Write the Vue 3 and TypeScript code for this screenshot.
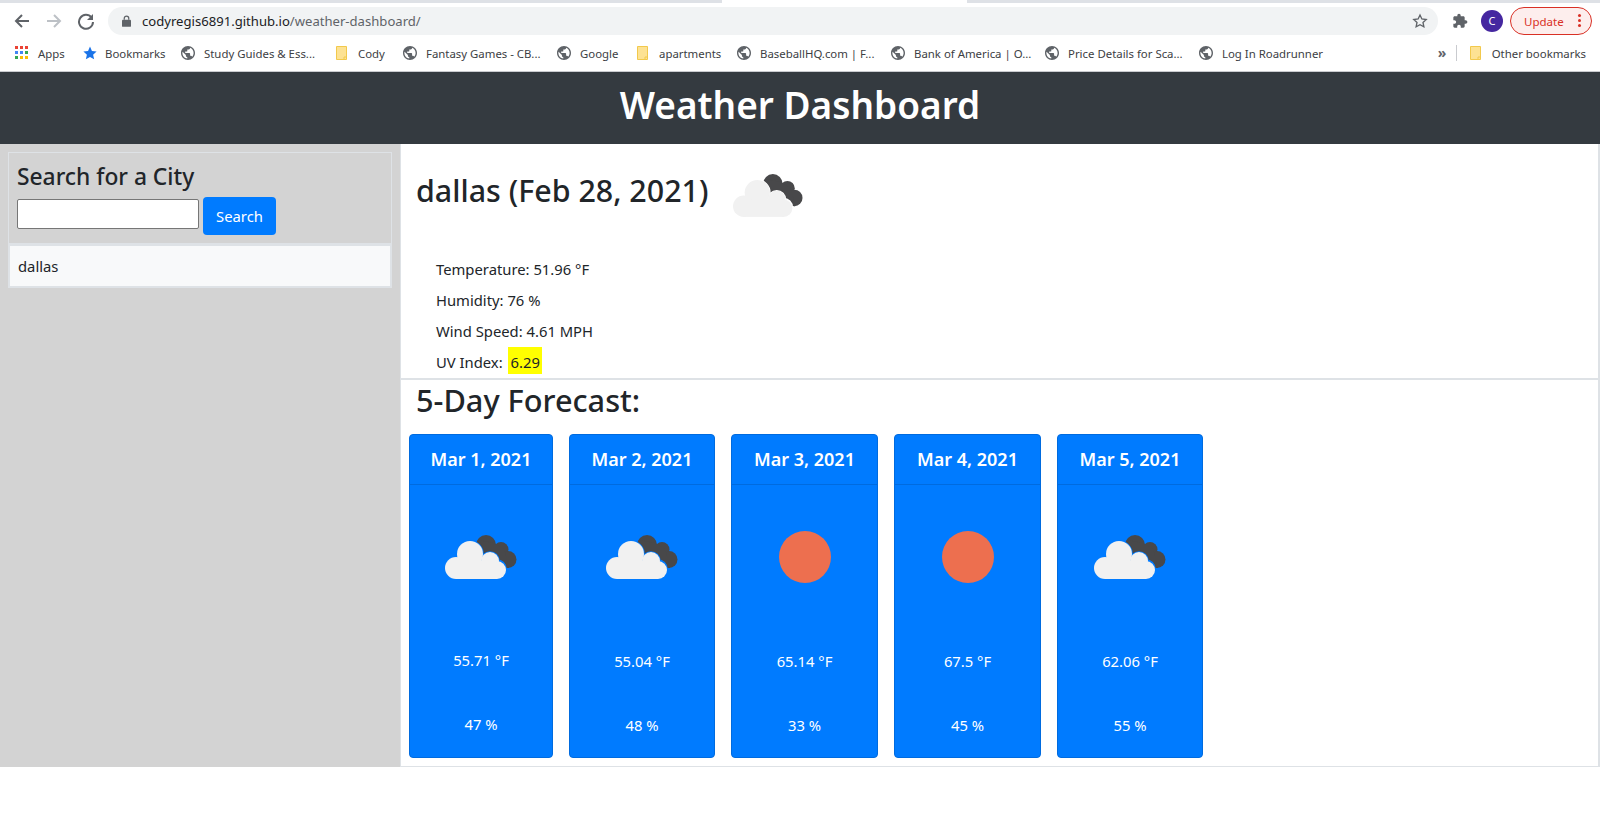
<script setup lang="ts">
interface Day { date: string; icon: 'cloud' | 'sun'; temp: string; hum: string; shift: boolean }
const days: Day[] = [
  { date: 'Mar 1, 2021', icon: 'cloud', temp: '55.71 °F', hum: '47 %', shift: true },
  { date: 'Mar 2, 2021', icon: 'cloud', temp: '55.04 °F', hum: '48 %', shift: false },
  { date: 'Mar 3, 2021', icon: 'sun', temp: '65.14 °F', hum: '33 %', shift: false },
  { date: 'Mar 4, 2021', icon: 'sun', temp: '67.5 °F', hum: '45 %', shift: false },
  { date: 'Mar 5, 2021', icon: 'cloud', temp: '62.06 °F', hum: '55 %', shift: false },
]
const marks: { label: string; kind: 'globe' | 'folder' | 'star' | 'apps'; w: number }[] = [
  { label: 'Apps', kind: 'apps', w: 68 },
  { label: 'Bookmarks', kind: 'star', w: 98 },
  { label: 'Study Guides & Ess...', kind: 'globe', w: 155 },
  { label: 'Cody', kind: 'folder', w: 67 },
  { label: 'Fantasy Games - CB...', kind: 'globe', w: 154 },
  { label: 'Google', kind: 'globe', w: 80 },
  { label: 'apartments', kind: 'folder', w: 100 },
  { label: 'BaseballHQ.com | F...', kind: 'globe', w: 154 },
  { label: 'Bank of America | O...', kind: 'globe', w: 154 },
  { label: 'Price Details for Sca...', kind: 'globe', w: 154 },
  { label: 'Log In Roadrunner', kind: 'globe', w: 130 },
]
const globe = 'M12 2C6.480 2 2 6.480 2 12s4.480 10 10 10 10-4.480 10-10S17.520 2 12 2zm-1 17.930c-3.950-.49-7-3.850-7-7.930 0-.62.08-1.210.21-1.790L9 15v1c0 1.100.9 2 2 2v1.930zm6.900-2.540c-.26-.81-1-1.390-1.900-1.390h-1v-3c0-.55-.45-1-1-1H8v-2h2c.55 0 1-.45 1-1V7h2c1.100 0 2-.9 2-2v-.41c2.930 1.190 5 4.060 5 7.410 0 2.080-.8 3.970-2.100 5.390z'
const puzzle = 'M20.500 11H19V7c0-1.100-.9-2-2-2h-4V3.500C13 2.120 11.880 1 10.500 1S8 2.120 8 3.500V5H4c-1.100 0-1.990.9-1.990 2v3.800H3.500c1.490 0 2.700 1.210 2.700 2.700s-1.210 2.700-2.700 2.700H2V20c0 1.100.9 2 2 2h3.800v-1.500c0-1.490 1.210-2.700 2.700-2.700 1.490 0 2.700 1.210 2.700 2.700V22H17c1.100 0 2-.9 2-2v-4h1.500c1.380 0 2.500-1.120 2.500-2.500S21.880 11 20.500 11z'
</script>

<template>
  <div class="page">
    <svg class="defs" width="0" height="0" aria-hidden="true">
      <symbol id="cloud" viewBox="0 0 72 44">
        <g fill="#48484a">
          <circle cx="41" cy="10" r="10"/><circle cx="56" cy="14.500" r="7.500"/><circle cx="63" cy="24.500" r="8.500"/>
          <path d="M33 5 49 8l10 6 5 19-16-2-14-14z"/>
        </g>
        <g fill="currentColor" stroke="currentColor" stroke-width="1.500">
          <circle cx="25" cy="19" r="13"/><circle cx="45" cy="26" r="9"/><circle cx="52" cy="34" r="9"/>
        </g>
        <g fill="#f1f1f1">
          <circle cx="25" cy="19" r="13"/><circle cx="45" cy="26" r="9"/><circle cx="11" cy="33" r="11"/><circle cx="52" cy="35" r="9"/>
          <rect x="11" y="26" width="41" height="18"/>
        </g>
      </symbol>
    </svg>
    <div class="tabstrip"><div class="tab-gap"></div></div>
    <div class="toolbar">
      <svg class="nav" width="18" height="18" viewBox="0 0 18 18"><path d="M16 9H4M9 3 3 9l6 6" fill="none" stroke="#5f6368" stroke-width="2"/></svg>
      <svg class="nav" width="18" height="18" viewBox="0 0 18 18"><path d="M2 9h12M9 3l6 6-6 6" fill="none" stroke="#bdc1c6" stroke-width="2"/></svg>
      <svg class="nav" width="18" height="18" viewBox="0 0 18 18"><path d="M14.500 5.500A7 7 0 1 0 16 10" fill="none" stroke="#5f6368" stroke-width="2"/><path d="M16 2v6h-6z" fill="#5f6368"/></svg>
      <div class="omnibox">
        <svg width="9" height="12" viewBox="0 0 10 13"><path d="M2.500 5V3.500a2.500 2.500 0 0 1 5 0V5" fill="none" stroke="#5f6368" stroke-width="1.400"/><rect y="5" width="10" height="8" rx="1" fill="#5f6368"/></svg>
        <span class="url"><span class="host">codyregis6891.github.io</span>/weather-dashboard/</span>
        <svg class="star" width="16" height="16" viewBox="0 0 24 24"><path d="m12 3 2.800 6 6.500.8-4.800 4.400 1.300 6.500L12 17.500 6.200 20.700l1.300-6.500L2.700 9.800 9.200 9z" fill="none" stroke="#5f6368" stroke-width="2"/></svg>
      </div>
      <svg class="puzzle" width="16" height="16" viewBox="0 0 24 24"><path :d="puzzle" fill="#5f6368"/></svg>
      <div class="avatar">C</div>
      <div class="update"><span>Update</span><i class="dots"></i></div>
    </div>
    <div class="bookmarks">
      <div v-for="m in marks" :key="m.label" class="mark" :class="m.kind" :style="{ width: m.w + 'px' }">
        <svg v-if="m.kind === 'apps'" width="14" height="14" viewBox="0 0 14 14">
          <rect x="0" y="0" width="3" height="3" fill="#ea4335"/><rect x="5" y="0" width="3" height="3" fill="#ea4335"/><rect x="10" y="0" width="3" height="3" fill="#ea4335"/>
          <rect x="0" y="5" width="3" height="3" fill="#4285f4"/><rect x="5" y="5" width="3" height="3" fill="#4285f4"/><rect x="10" y="5" width="3" height="3" fill="#34a853"/>
          <rect x="0" y="10" width="3" height="3" fill="#34a853"/><rect x="5" y="10" width="3" height="3" fill="#fbbc04"/><rect x="10" y="10" width="3" height="3" fill="#fbbc04"/>
        </svg>
        <svg v-else-if="m.kind === 'star'" width="14" height="14" viewBox="0 0 24 24"><path d="m12 1 3.300 7.500 8 .8-6 5.500 1.800 8L12 18.700 4.900 22.800l1.800-8-6-5.500 8-.8z" fill="#1a73e8"/></svg>
        <svg v-else-if="m.kind === 'folder'" width="11" height="14" viewBox="0 0 11 14"><path d="M.5.5h10v13H.5z" fill="#fde293" stroke="#f2c94c"/><path d="M8 13.500v-2.500h2.500" fill="none" stroke="#f2c94c"/></svg>
        <svg v-else width="14" height="14" viewBox="2 2 20 20"><path :d="globe" fill="#5f6368"/></svg>
        <span>{{ m.label }}</span>
      </div>
      <div class="chev">»</div>
      <div class="sep"></div>
      <div class="mark other">
        <svg width="11" height="14" viewBox="0 0 11 14"><path d="M.5.5h10v13H.5z" fill="#fde293" stroke="#f2c94c"/><path d="M8 13.500v-2.500h2.500" fill="none" stroke="#f2c94c"/></svg>
        <span>Other bookmarks</span>
      </div>
    </div>

    <header class="jumbo"><h1>Weather Dashboard</h1></header>

    <div class="layout">
      <aside class="side">
        <div class="sidebox">
          <div class="searchbox">
            <h3>Search for a City</h3>
            <div class="form">
              <input type="text" aria-label="City" />
              <button type="button">Search</button>
            </div>
          </div>
          <div class="history">dallas</div>
        </div>
      </aside>

      <main class="content">
        <section class="today">
          <div class="title">
            <h2>dallas (Feb 28, 2021)</h2>
            <svg class="bigicon" width="70" height="43"><use href="#cloud"/></svg>
          </div>
          <ul class="facts">
            <li>Temperature: 51.96 °F</li>
            <li>Humidity: 76 %</li>
            <li>Wind Speed: 4.61 MPH</li>
            <li>UV Index: <mark>6.29</mark></li>
          </ul>
        </section>
        <section class="forecast">
          <h2>5-Day Forecast:</h2>
          <div class="cards">
            <article v-for="d in days" :key="d.date" class="card" :class="{ first: d.shift }">
              <h5>{{ d.date }}</h5>
              <div class="icon">
                <svg v-if="d.icon === 'cloud'" class="cardcloud" width="72" height="44"><use href="#cloud"/></svg>
                <svg v-else viewBox="0 0 52 52" width="52" height="52"><circle cx="26" cy="26" r="26" fill="#ed6f4f"/></svg>
              </div>
              <p class="temp">{{ d.temp }}</p>
              <p class="hum">{{ d.hum }}</p>
            </article>
          </div>
        </section>
      </main>
    </div>
  </div>
</template>

<style>
html, body { margin: 0; background: #fff; }
</style>

<style scoped>
.page { height: 828px; overflow: hidden; font-family: "Noto Sans", "Open Sans", sans-serif; color: #212529; position: relative; }
.defs { position: absolute; }
.tabstrip { height: 3px; background: #dee1e6; display: flex; }
.tab-gap { width: 245px; height: 3px; margin-left: 722px; background: #fff; }
.toolbar { height: 36px; display: flex; align-items: center; padding: 0 0 0 13px; box-sizing: border-box; gap: 14px; background: #fff; }
.nav { flex: none; }
.omnibox { height: 28px; width: 1330px; margin-left: -1px; border-radius: 14px; background: #f1f3f4; display: flex; align-items: center; padding: 0 10px 0 14px; box-sizing: border-box; flex: none; }
.url { font-size: 13.100px; margin-left: 11px; color: #5f6368; flex: 1; }
.host { color: #202124; }
.puzzle { flex: none; }
.avatar { width: 22px; height: 22px; border-radius: 50%; background: #4527a0; color: #fff; font-size: 11px; line-height: 22px; text-align: center; flex: none; margin-left: -1px; }
.update { width: 82px; height: 28px; box-sizing: border-box; border: 1px solid #d93025; border-radius: 14px; background: #fdeeed; color: #d93025; font-size: 11.500px; display: flex; align-items: center; padding-left: 13px; position: relative; margin-left: -7px; flex: none; }
.dots { width: 3px; height: 3px; border-radius: 50%; background: #d93025; box-shadow: 0 -5px 0 #d93025, 0 5px 0 #d93025; position: absolute; right: 10px; top: 11px; }
.bookmarks { height: 28px; padding: 0 14px 4px 15px; display: flex; align-items: center; border-bottom: 1px solid #c9cbcf; font-size: 11.400px; color: #3c4043; }
.mark { display: flex; align-items: center; gap: 9px; white-space: nowrap; flex: none; }
.mark svg { flex: none; }
.mark.star { gap: 8px; }
.mark.folder { gap: 11px; }
.chev { margin-left: auto; font-size: 14px; font-weight: 700; line-height: 14px; color: #5f6368; width: 9px; }
.sep { width: 1px; height: 16px; background: #c9cbcf; margin-left: 9px; }
.other { margin-left: 13px; gap: 11px; }
.jumbo { height: 72px; background: #343a40; display: flex; align-items: center; justify-content: center; padding-bottom: 6px; box-sizing: border-box; }
.jumbo h1 { margin: 0; font-size: 37px; font-weight: 600; color: #fff; line-height: 1.2; }
.layout { display: flex; height: 623px; }
.side { width: 400px; flex: none; background: #d3d3d3; padding: 8px 8px 0; box-sizing: border-box; }
.sidebox { width: 384px; height: 136px; box-sizing: border-box; border: 1px solid #dee2e6; }
.searchbox { height: 90px; padding: 9px 8px 0; box-sizing: border-box; }
.searchbox h3 { margin: 0; font-size: 22.800px; font-weight: 500; line-height: 30px; }
.form { display: flex; align-items: flex-start; gap: 4px; margin-top: 5px; }
input { width: 182px; height: 30px; margin-top: 2px; box-sizing: border-box; border: 1px solid #767676; border-radius: 2px; background: #fff; padding: 1px 2px; }
button { width: 73px; height: 38px; border: 0; border-radius: 4px; background: #007bff; color: #fff; font: 400 14.800px "Noto Sans", "Open Sans", sans-serif; }
.history { height: 44px; border: solid #dee2e6; border-width: 3px 1px 1px; background: #f8f9fa; box-sizing: border-box; padding: 0 8px; line-height: 40px; font-size: 14.800px; }
.content { flex: 1; min-width: 0; border-left: 1px solid #dee2e6; border-right: 2px solid #dee2e6; border-bottom: 1px solid #dee2e6; }
.today { height: 236px; border-bottom: 2px solid #dee2e6; box-sizing: border-box; padding-left: 15px; }
.title { display: flex; align-items: flex-start; height: 110px; }
.title h2 { margin: 29px 0 0; font-size: 30.400px; font-weight: 500; line-height: 1.2; }
.bigicon { margin: 30px 0 0 25px; color: #fff; }
.facts { list-style: none; margin: 0; padding: 0 0 0 20px; font-size: 14.800px; }
.facts li { height: 31px; line-height: 31px; }
mark { background: #ff0; color: #212529; margin-left: 1px; padding: 5px 2.500px 2px 3px; }
.forecast { padding-left: 8px; }
.forecast h2 { margin: 0 0 0 7px; padding-top: 2px; font-size: 30.700px; font-weight: 500; line-height: 1.2; height: 54px; box-sizing: border-box; }
.cards { display: grid; grid-template-columns: 144px 146px 147px 147px 146px; gap: 16px; }
.card { height: 324px; background: #007bff; border: 1px solid #006bdf; border-radius: 4px; box-sizing: border-box; color: #fff; text-align: center; }
.card h5 { margin: 0; height: 50px; line-height: 48px; font-size: 18px; font-weight: 600; border-bottom: 1px solid #006bdf; box-sizing: border-box; }
.icon { height: 144px; display: flex; align-items: center; justify-content: center; }
.cardcloud { color: #007bff; }
.card p { margin: 0; font-size: 14.800px; line-height: 24px; }
.card .temp { margin-top: 20px; }
.card .hum { padding-top: 40px; }
.first .icon { height: 143px; }
</style>
